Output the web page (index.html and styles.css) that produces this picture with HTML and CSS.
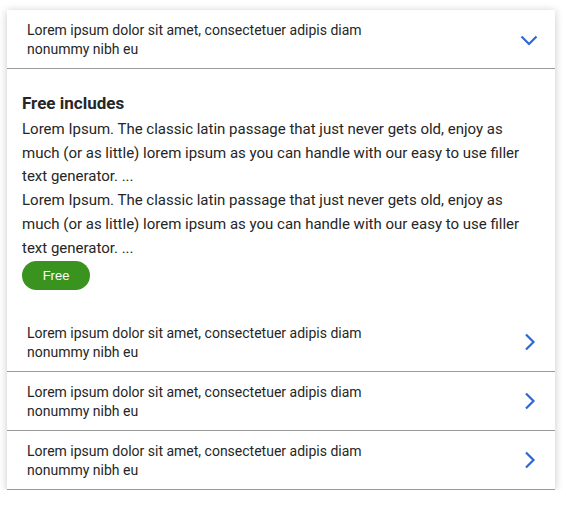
FILE: index.html
```html
<!DOCTYPE html>
<html>
<head>
<meta charset="utf-8">
<link rel="stylesheet" href="styles.css">
</head>
<body>
<div class="card">
  <div class="row row-open">
    <div class="row-text">Lorem ipsum dolor sit amet, consectetuer adipis diam<br>nonummy nibh eu</div>
    <svg class="chev-down" width="18" height="11" viewBox="0 0 18 11"><path d="M1.5 1.5 L9 9 L16.5 1.5" fill="none" stroke="#2f68d6" stroke-width="2.2"/></svg>
  </div>
  <div class="panel">
    <h3 class="panel-title">Free includes</h3>
    <p class="panel-text">Lorem Ipsum. The classic latin passage that just never gets old, enjoy as much (or as little) lorem ipsum as you can handle with our easy to use filler text generator. ...</p>
    <p class="panel-text">Lorem Ipsum. The classic latin passage that just never gets old, enjoy as much (or as little) lorem ipsum as you can handle with our easy to use filler text generator. ...</p>
    <span class="badge">Free</span>
  </div>
  <div class="row">
    <div class="row-text">Lorem ipsum dolor sit amet, consectetuer adipis diam<br>nonummy nibh eu</div>
    <svg class="chev-right" width="12" height="18" viewBox="0 0 12 18"><path d="M2 1.5 L9.5 9 L2 16.5" fill="none" stroke="#2f68d6" stroke-width="2.2"/></svg>
  </div>
  <div class="row">
    <div class="row-text">Lorem ipsum dolor sit amet, consectetuer adipis diam<br>nonummy nibh eu</div>
    <svg class="chev-right" width="12" height="18" viewBox="0 0 12 18"><path d="M2 1.5 L9.5 9 L2 16.5" fill="none" stroke="#2f68d6" stroke-width="2.2"/></svg>
  </div>
  <div class="row">
    <div class="row-text">Lorem ipsum dolor sit amet, consectetuer adipis diam<br>nonummy nibh eu</div>
    <svg class="chev-right" width="12" height="18" viewBox="0 0 12 18"><path d="M2 1.5 L9.5 9 L2 16.5" fill="none" stroke="#2f68d6" stroke-width="2.2"/></svg>
  </div>
</div>
</body>
</html>
```
FILE: styles.css
```css
html, body {
  margin: 0;
  padding: 0;
  background: #fff;
}
body {
  padding: 10px 11px 0 7px;
  font-family: Roboto, "Noto Sans", sans-serif;
  color: #262626;
}
.card {
  background: #fff;
  box-shadow: 0 1px 8px rgba(0, 0, 0, 0.22);
}
.row {
  display: flex;
  align-items: center;
  justify-content: space-between;
  height: 58px;
  padding: 0 17px 0 20px;
  border-bottom: 1px solid #9a9a9a;
  box-sizing: content-box;
}
.row-text {
  font-size: 14px;
  line-height: 19px;
  padding-top: 2px;
}
.chev-down {
  display: block;
  margin-top: 2px;
}
.chev-right {
  display: block;
  margin-right: 2px;
}
.panel {
  padding: 23px 15px 23px 15px;
}
.panel-title {
  margin: 0 0 4px;
  font-size: 17px;
  font-weight: 700;
  line-height: 22px;
}
.panel-text {
  margin: 0;
  font-size: 15px;
  line-height: 23.7px;
}
.badge {
  display: inline-block;
  margin-top: 1px;
  width: 68px;
  height: 29px;
  line-height: 29px;
  border-radius: 15px;
  background: #3a921f;
  color: #fff;
  text-align: center;
  font-family: "Liberation Sans", Arial, sans-serif;
  font-size: 13px;
}
```
